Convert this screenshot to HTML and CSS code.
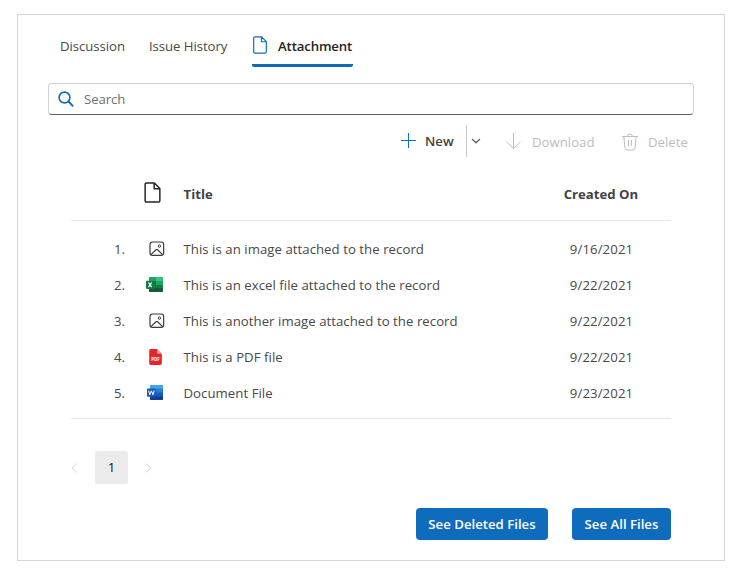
FILE: index.html
```
<!DOCTYPE html>
<html lang="en">
<head>
<meta charset="utf-8">
<title>Attachments</title>
<link rel="stylesheet" href="styles.css">
</head>
<body>
<svg width="0" height="0" class="defs" aria-hidden="true">
  <symbol id="page" viewBox="0 0 16 20"><path d="M2.2 1H9.8L15 6.2V17.8Q15 19 13.8 19H2.2Q1 19 1 17.8V2.2Q1 1 2.2 1ZM9.6 1.2V6.4H14.8" fill="none" stroke="currentColor" stroke-linejoin="round"/></symbol>
  <symbol id="image" viewBox="0 0 16 16"><rect x="1" y="1" width="13.6" height="13.4" rx="2.4" fill="none" stroke="#3b3b3b" stroke-width="1.2"/><path d="M2 13.6L7 8.8Q7.8 8.1 8.6 8.8L13.6 13.6" fill="none" stroke="#3b3b3b" stroke-width="1.2"/><circle cx="10.4" cy="5.1" r="1.2" fill="none" stroke="#3b3b3b"/></symbol>
</svg>
<main class="panel">
  <nav class="tabs">
    <a class="tab t-disc">Discussion</a>
    <a class="tab t-hist">Issue History</a>
    <a class="tab active"><svg class="tab-icon" viewBox="0 0 16 20"><use href="#page" width="16" height="20"/></svg><span>Attachment</span></a>
  </nav>
  <div class="search">
    <svg width="16" height="16" viewBox="0 0 16 16" fill="none" stroke="#0f6cbd"><circle cx="6.5" cy="6.5" r="5.4" stroke-width="1.6"/><path d="M10.5 10.5L14.7 14.8" stroke-width="1.9" stroke-linecap="round"/></svg>
    <span>Search</span>
  </div>
  <div class="toolbar">
    <button class="new"><svg width="16" height="16" viewBox="0 0 16 16"><path d="M0 7.5H15M7.5 0V15" stroke="#0f6cbd"/></svg><span>New</span></button>
    <button class="split"><svg width="10" height="6" viewBox="0 0 10 6"><path d="M1 1L5 4.8L9 1" fill="none" stroke="#616161" stroke-width="1.2"/></svg></button>
    <button class="tool download"><svg width="16" height="17" viewBox="0 0 16 17" fill="none" stroke="#bdbdbd"><path d="M7.5 0V15.5M.5 8.7L7.5 15.7L14.5 8.7"/></svg><span>Download</span></button>
    <button class="tool delete"><svg width="16" height="18" viewBox="0 0 16 18" fill="none" stroke="#bdbdbd"><path d="M0 3.5H16M5.6 3.3Q5.6 1 8 1T10.4 3.3M1.8 3.5L3 15.2Q3.2 17 5 17H11Q12.8 17 13 15.2L14.2 3.5M6.5 7V13M9.5 7V13"/></svg><span>Delete</span></button>
  </div>
  <section class="table">
    <div class="row head"><span></span><svg class="head-icon" viewBox="0 0 16 20"><use href="#page" width="16" height="20"/></svg><span class="title">Title</span><span class="date">Created On</span></div>
    <div class="rows">
      <div class="row"><span class="num">1.</span><svg class="icon" viewBox="0 0 20 16"><use href="#image" x="4" width="16" height="16"/></svg><span class="title">This is an image attached to the record</span><span class="date">9/16/2021</span></div>
      <div class="row"><span class="num">2.</span><svg class="icon" viewBox="0 0 20 16"><rect x="4" y="0" width="14" height="15" rx="1" fill="#107c41"/><path d="M4 4V1Q4 0 5 0H11V4Z" fill="#21a366"/><path d="M11 0H17Q18 0 18 1V4H11Z" fill="#33c481"/><path d="M11 4H18V8H11Z" fill="#21a366"/><path d="M4 11H18V14Q18 15 17 15H5Q4 15 4 14Z" fill="#185c37"/><rect x="1" y="3.7" width="8.2" height="8.2" rx=".8" fill="#107c41"/><path d="M3.5 5.5L6.7 10.2M6.7 5.5L3.5 10.2" stroke="#fff" stroke-width="1.2"/></svg><span class="title">This is an excel file attached to the record</span><span class="date">9/22/2021</span></div>
      <div class="row"><span class="num">3.</span><svg class="icon" viewBox="0 0 20 16"><use href="#image" x="4" width="16" height="16"/></svg><span class="title">This is another image attached to the record</span><span class="date">9/22/2021</span></div>
      <div class="row"><span class="num">4.</span><svg class="icon" viewBox="0 0 20 16"><path d="M5.7 0H12L16.8 4.7V14.2Q16.8 16 15 16H6Q4.2 16 4.2 14.2V1.5Q4.2 0 5.7 0Z" fill="#e5252a"/><path d="M12 0V3.4Q12 4.7 13.3 4.7H16.8Z" fill="#f7a3a5"/><text class="pdf" x="10.5" y="11.8" text-anchor="middle">PDF</text></svg><span class="title">This is a PDF file</span><span class="date">9/22/2021</span></div>
      <div class="row"><span class="num">5.</span><svg class="icon" viewBox="0 0 20 16"><rect x="5" y="0" width="13" height="15" rx="1" fill="#2b7cd3"/><path d="M5 3.8V1Q5 0 6 0H17Q18 0 18 1V3.8Z" fill="#41a5ee"/><path d="M5 7.5H18V11.3H5Z" fill="#185abd"/><path d="M5 11.3H18V14Q18 15 17 15H6Q5 15 5 14Z" fill="#103f91"/><rect x="2" y="3.5" width="8.8" height="8.2" rx=".8" fill="#185abd"/><path d="M3.6 5.5L4.8 9.8L6.4 5.8L8 9.8L9.2 5.5" fill="none" stroke="#fff"/></svg><span class="title">Document File</span><span class="date">9/23/2021</span></div>
    </div>
  </section>
  <div class="pager">
    <svg width="7" height="10" viewBox="0 0 7 10"><path d="M6 .5L1 5L6 9.5" fill="none" stroke="#d6d6d6"/></svg>
    <span class="current">1</span>
    <svg width="7" height="10" viewBox="0 0 7 10"><path d="M1 .5L6 5L1 9.5" fill="none" stroke="#d6d6d6"/></svg>
  </div>
  <div class="actions"><button class="primary b1">See Deleted Files</button><button class="primary b2">See All Files</button></div>
</main>
</body>
</html>
```
FILE: styles.css
```
* { box-sizing: border-box; }
body { margin: 0; background: #fff; color: #484848; font: 13.2px/20px "Open Sans", "Noto Sans", sans-serif; white-space: nowrap; }
svg { display: block; flex: none; }
.defs { position: absolute; }
button { border: 0; padding: 0; background: none; font: inherit; color: inherit; display: flex; align-items: center; }
.panel { width: 708px; height: 547px; margin: 14px 0 0 17px; border: 1px solid #d6d6d6; padding: 0 30px; }
.tabs { display: flex; padding: 21px 0 0 12px; height: 68px; }
.tab { height: 31px; letter-spacing: -.06px; }
.t-disc { width: 89px; }
.t-hist { width: 103px; }
.tab.active { width: 101px; display: flex; color: #242424; font-weight: 600; border-bottom: 3px solid #0f6cbd; border-radius: 2px; letter-spacing: -.14px; }
.tab-icon { width: 16px; height: 18px; color: #0f6cbd; margin-right: 10px; stroke-width: 1.3; }
.search { height: 32px; border: 1px solid #d1d1d1; border-bottom-color: #616161; border-radius: 4px; display: flex; align-items: center; gap: 10px; padding-left: 9px; color: #707070; letter-spacing: -.1px; }
.toolbar { display: flex; height: 32px; margin: 10px 0 0 353px; align-items: center; }
.new { width: 65px; gap: 8px; font-weight: 600; color: #424242; }
.split { width: 40px; height: 32px; border-left: 1px solid #c4c4c4; padding-left: 4px; }
.tool { color: #bdbdbd; gap: 10px; padding-top: 1px; }
.download { width: 116px; }
.table { width: 600px; margin-left: 23px; }
.row { display: grid; grid-template-columns: 74px 38.5px 367.5px 120px; height: 36px; align-items: center; }
.head { height: 64px; border-bottom: 1px solid #e8e8e8; padding-top: 10px; font-weight: 700; color: #424242; }
.head-icon { width: 17px; height: 21px; color: #242424; stroke-width: 1.4; margin: -2px 0 0 -1px; }
.rows { height: 198px; padding-top: 10px; border-bottom: 1px solid #e8e8e8; }
.rows .title { letter-spacing: .045px; }
.num { justify-self: start; margin-left: 43px; }
.icon { width: 20px; height: 16px; }
.pdf { font: 700 4.4px "Open Sans", sans-serif; fill: #fff; }
.date { width: 101px; text-align: center; letter-spacing: .1px; }
.head .date { width: 100px; letter-spacing: 0; }
.pager { display: flex; align-items: center; gap: 17px; margin: 32px 0 0 23px; height: 33px; }
.current { width: 33px; height: 33px; border-radius: 2px; background: #ebebeb; color: #111; text-align: center; line-height: 33px; }
.actions { display: flex; gap: 24px; margin: 24px 0 0 368px; }
.primary { height: 32px; border-radius: 4px; background: #0f6cbd; color: #fff; font-weight: 600; justify-content: center; }
.b1 { width: 132px; }
.b2 { width: 99px; }
```
